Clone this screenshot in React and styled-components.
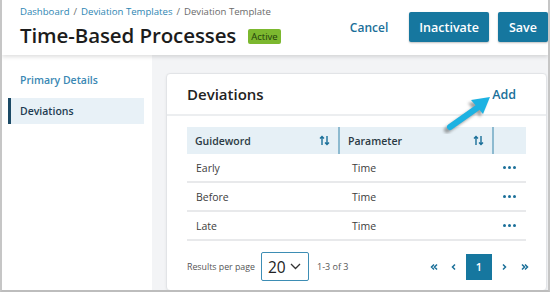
import React from "react";
import styled, { createGlobalStyle } from "styled-components";

const GlobalStyle = createGlobalStyle`
  body {
    margin: 0;
    font-family: "Open Sans", "Noto Sans", sans-serif;
    background: #ffffff;
  }
`;

const Frame = styled.div`
  position: relative;
  width: 550px;
  height: 292px;
  box-sizing: border-box;
  border-left: 2px solid #c6c6c6;
  border-right: 2px solid #c6c6c6;
  border-bottom: 2px solid #bdbdbd;
  display: flex;
  flex-direction: column;
  background: #f3f4f6;
  overflow: hidden;
`;

const Header = styled.header`
  height: 55px;
  flex-shrink: 0;
  background: #ffffff;
  display: flex;
  justify-content: space-between;
  align-items: flex-start;
  padding-left: 18px;
  box-shadow: 0 2px 4px rgba(0, 0, 0, 0.13);
  position: relative;
  z-index: 1;
`;

const TitleBlock = styled.div`
  display: flex;
  flex-direction: column;
  padding-top: 5px;
`;

const Breadcrumb = styled.div`
  font-size: 9.6px;
  color: #6b6b6b;
  display: flex;
  gap: 4px;
`;

const Crumb = styled.span`
  color: ${(p) => (p.current ? "#6b6b6b" : "#2e86b3")};
`;

const TitleRow = styled.div`
  display: flex;
  align-items: center;
  gap: 12px;
  margin-top: 3px;
`;

const Title = styled.h1`
  margin: 0;
  font-size: 20.5px;
  font-weight: 600;
  color: #1c1c1c;
  letter-spacing: -0.1px;
`;

const Badge = styled.span`
  background: #7cb82f;
  color: #1f3d0a;
  font-size: 9.5px;
  padding: 1px 3px;
  border-radius: 2px;
  margin-top: 2px;
`;

const Actions = styled.div`
  display: flex;
  align-items: center;
  padding-top: 12px;
`;

const LinkButton = styled.button`
  border: none;
  background: none;
  color: #1a6f99;
  font-family: inherit;
  font-weight: 600;
  font-size: 12px;
  padding: 0;
  margin-right: 21px;
`;

const PrimaryButton = styled.button`
  height: 30px;
  padding: 0 ${(p) => p.pad}px;
  border: none;
  border-radius: 2px;
  background: #16779f;
  color: #ffffff;
  font-family: inherit;
  font-weight: 600;
  font-size: 12.5px;
  margin-left: ${(p) => p.gap || 0}px;
  box-shadow: 0 1px 2px rgba(0, 0, 0, 0.25);
`;

const Body = styled.div`
  flex: 1;
  display: flex;
`;

const Sidebar = styled.nav`
  width: 150px;
  flex-shrink: 0;
  background: #ffffff;
  padding: 12px 8px 0 6px;
  box-sizing: border-box;
  display: flex;
  flex-direction: column;
  gap: 5px;
`;

const NavItem = styled.div`
  height: 26px;
  display: flex;
  align-items: center;
  padding-left: ${(p) => (p.active ? 9 : 12)}px;
  font-size: 10.5px;
  font-weight: 600;
  color: ${(p) => (p.active ? "#1f3c52" : "#3a88b4")};
  background: ${(p) => (p.active ? "#e8f1f7" : "transparent")};
  border-left: ${(p) => (p.active ? "3px solid #1c4a66" : "none")};
`;

const Main = styled.main`
  flex: 1;
  padding: 18px 1px 0 14px;
  display: flex;
`;

const Card = styled.section`
  flex: 1;
  background: #ffffff;
  border: 1px solid #e2e4e7;
  border-radius: 4px;
  box-shadow: 0 1px 3px rgba(0, 0, 0, 0.06);
  display: flex;
  flex-direction: column;
`;

const CardHeader = styled.div`
  height: 40px;
  display: flex;
  align-items: center;
  justify-content: space-between;
  padding: 0 30px 0 20px;
  border-bottom: 2px solid #eceef0;
`;

const CardTitle = styled.h2`
  margin: 0;
  font-size: 15px;
  font-weight: 600;
  color: #222;
`;

const AddLink = styled.span`
  font-size: 12.5px;
  font-weight: 600;
  color: #1a6f99;
`;

const CardBody = styled.div`
  padding: 11px 20px 0 20px;
  display: flex;
  flex-direction: column;
`;

const Grid = styled.div`
  display: grid;
  grid-template-columns: 153px 154px 1fr;
`;

const HeadCell = styled.div`
  height: 27px;
  background: #e6f0f6;
  display: flex;
  align-items: center;
  justify-content: space-between;
  padding: 0 8px 0 ${(p) => p.pl}px;
  font-size: 10.5px;
  font-weight: 600;
  color: #2b3a44;
  border-right: ${(p) => (p.divider ? "2px solid #8dbad0" : "none")};
`;

const Cell = styled.div`
  height: 27px;
  display: flex;
  align-items: center;
  justify-content: ${(p) => (p.end ? "flex-end" : "flex-start")};
  padding: 0 ${(p) => (p.end ? 10 : 0)}px 0 ${(p) => p.pl || 0}px;
  font-size: 10.5px;
  color: #3d3d3d;
  border-bottom: 2px solid #e8e9eb;
`;

const Dots = styled.span`
  display: flex;
  gap: 2px;
  & > i {
    width: 3px;
    height: 3px;
    border-radius: 50%;
    background: #1a6f99;
  }
`;

const Footer = styled.div`
  height: 47px;
  padding-top: 2px;
  display: flex;
  align-items: center;
`;

const FooterLabel = styled.span`
  font-size: 8.8px;
  color: #555;
  margin-right: 6px;
`;

const Select = styled.div`
  width: 48px;
  height: 29px;
  box-sizing: border-box;
  border: 1px solid #3d8db4;
  border-radius: 2px;
  display: flex;
  align-items: center;
  justify-content: space-between;
  padding: 0 7px 0 6px;
  font-size: 15.5px;
  color: #222;
`;

const Range = styled.span`
  font-size: 9px;
  color: #555;
  margin-left: 8px;
`;

const Pager = styled.div`
  margin-left: auto;
  margin-right: -10px;
  display: flex;
  align-items: center;
`;

const PageArrow = styled.span`
  width: ${(p) => p.w}px;
  display: flex;
  justify-content: center;
  color: #1a6f99;
`;

const PageNum = styled.span`
  width: 26px;
  height: 26px;
  background: #16779f;
  color: #fff;
  font-size: 11px;
  font-weight: 600;
  display: flex;
  align-items: center;
  justify-content: center;
  margin: 0 2px;
`;

const Pointer = styled.svg`
  position: absolute;
  left: 439px;
  top: 92px;
`;

const SortIcon = () => (
  <svg width="11" height="11" viewBox="0 0 11 11" fill="none" stroke="#1a6f99" strokeWidth="1.4">
    <path d="M3 10V1.5M1 3.5L3 1.5L5 3.5" />
    <path d="M8 1v8.5M6 7.5L8 9.5L10 7.5" />
  </svg>
);

const Chevron = ({ d }) => (
  <svg width="8" height="8" viewBox="0 0 8 8" fill="none" stroke="currentColor" strokeWidth="1.5">
    <path d={d} />
  </svg>
);

const rows = ["Early", "Before", "Late"];

export default function App() {
  return (
    <Frame>
      <GlobalStyle />
      <Header>
        <TitleBlock>
          <Breadcrumb>
            <Crumb>Dashboard</Crumb>
            <span>/</span>
            <Crumb>Deviation Templates</Crumb>
            <span>/</span>
            <Crumb current>Deviation Template</Crumb>
          </Breadcrumb>
          <TitleRow>
            <Title>Time-Based Processes</Title>
            <Badge>Active</Badge>
          </TitleRow>
        </TitleBlock>
        <Actions>
          <LinkButton>Cancel</LinkButton>
          <PrimaryButton pad={10}>Inactivate</PrimaryButton>
          <PrimaryButton pad={11} gap={9}>Save</PrimaryButton>
        </Actions>
      </Header>
      <Body>
        <Sidebar>
          <NavItem>Primary Details</NavItem>
          <NavItem active>Deviations</NavItem>
        </Sidebar>
        <Main>
          <Card>
            <CardHeader>
              <CardTitle>Deviations</CardTitle>
              <AddLink>Add</AddLink>
            </CardHeader>
            <CardBody>
              <Grid>
                <HeadCell pl={8} divider>
                  Guideword <SortIcon />
                </HeadCell>
                <HeadCell pl={8} divider>
                  Parameter <SortIcon />
                </HeadCell>
                <HeadCell pl={8} />
                {rows.map((r) => (
                  <React.Fragment key={r}>
                    <Cell pl={9}>{r}</Cell>
                    <Cell pl={12}>Time</Cell>
                    <Cell end>
                      <Dots>
                        <i />
                        <i />
                        <i />
                      </Dots>
                    </Cell>
                  </React.Fragment>
                ))}
              </Grid>
              <Footer>
                <FooterLabel>Results per page</FooterLabel>
                <Select>
                  20
                  <svg width="11" height="7" viewBox="0 0 11 7" fill="none" stroke="#333" strokeWidth="1.3">
                    <path d="M1 1l4.5 4.5L10 1" />
                  </svg>
                </Select>
                <Range>1-3 of 3</Range>
                <Pager>
                  <PageArrow w={20}>
                    <Chevron d="M4 1.5L1.5 4L4 6.5M7 1.5L4.5 4L7 6.5" />
                  </PageArrow>
                  <PageArrow w={20}>
                    <Chevron d="M5 1.5L2.5 4L5 6.5" />
                  </PageArrow>
                  <PageNum>1</PageNum>
                  <PageArrow w={20}>
                    <Chevron d="M3 1.5L5.5 4L3 6.5" />
                  </PageArrow>
                  <PageArrow w={22}>
                    <Chevron d="M1 1.5L3.5 4L1 6.5M4 1.5L6.5 4L4 6.5" />
                  </PageArrow>
                </Pager>
              </Footer>
            </CardBody>
          </Card>
        </Main>
      </Body>
      <Pointer width="54" height="42" viewBox="0 0 54 42">
        <defs>
          <filter id="sh" x="-30%" y="-30%" width="160%" height="160%">
            <feGaussianBlur stdDeviation="1.6" />
          </filter>
        </defs>
        <g transform="translate(-3 3)" fill="#555" opacity="0.55" filter="url(#sh)">
          <path d="M9 35L36 16" stroke="#555" strokeWidth="6" strokeLinecap="round" />
          <path d="M30 8L49 5L42 22Z" />
        </g>
        <path d="M9 35L36 16" stroke="#1db2e2" strokeWidth="6" strokeLinecap="round" />
        <path d="M30 8L49 5L42 22Z" fill="#1db2e2" />
      </Pointer>
    </Frame>
  );
}
